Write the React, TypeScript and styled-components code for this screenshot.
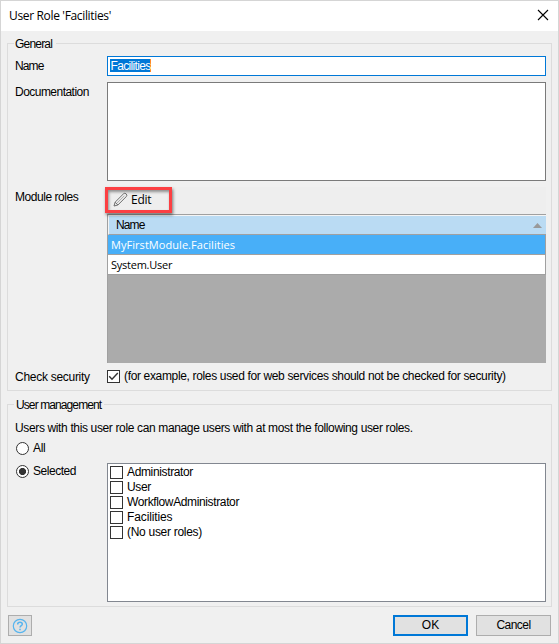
import React from 'react';
import styled, { createGlobalStyle } from 'styled-components';

const GlobalStyle = createGlobalStyle`
  * { box-sizing: border-box; }
  body { margin: 0; background: #f0f0f0; }
`;

const Dialog = styled.main`
  width: 559px;
  height: 644px;
  display: flex;
  flex-direction: column;
  border: 1px solid #d5d5d5;
  background: #f0f0f0;
  color: #000;
  font: 12px/15px "Liberation Sans", Arial, sans-serif;
  overflow: hidden;
`;

const TitleBar = styled.header`
  height: 30px;
  flex: none;
  display: flex;
  align-items: center;
  justify-content: space-between;
  padding: 0 9px 0 8px;
  background: #fff;
`;

const Title = styled.h1`
  margin: 0;
  font: 12px/16px "Open Sans", "Noto Sans", sans-serif;
  letter-spacing: -0.34px;
`;

const CloseButton = styled.button`
  display: flex;
  padding: 0 0 2px;
  border: 0;
  background: none;
`;

const Text = styled.span<{ $spacing?: number }>`
  white-space: nowrap;
  letter-spacing: ${({ $spacing = -0.36 }) => $spacing}px;
`;

const Group = styled.section<{ $height: number; $top: number }>`
  height: ${({ $height }) => $height}px;
  flex: none;
  margin: ${({ $top }) => $top}px 6px 0 6px;
  padding: 0 4px 0 7px;
  border: 1px solid #dcdcdc;
`;

const Legend = styled.h2<{ $width: number; $indent: number; $spacing: number }>`
  width: ${({ $width }) => $width}px;
  height: 15px;
  margin: -7px 0 0 -1px;
  padding-left: ${({ $indent }) => $indent}px;
  background: #f0f0f0;
  font: inherit;
  white-space: nowrap;
  letter-spacing: ${({ $spacing }) => $spacing}px;
`;

const Field = styled.div<{ $top: number }>`
  display: grid;
  grid-template-columns: 92px 439px;
  align-items: start;
  margin-top: ${({ $top }) => $top}px;
`;

const FieldLabel = styled.label<{ $spacing: number; $top?: number }>`
  padding-top: ${({ $top = 3 }) => $top}px;
  white-space: nowrap;
  letter-spacing: ${({ $spacing }) => $spacing}px;
`;

const NameInput = styled.div`
  height: 20px;
  padding: 2px;
  border: 1px solid #0078d7;
  background: #fff;
  display: flex;
`;

const Selection = styled.span`
  width: 41px;
  height: 13px;
  padding-left: 0.5px;
  border-right: 1px solid #ff8728;
  background: #0078d7;
  color: #fff;
  line-height: 14px;
  letter-spacing: -0.66px;
`;

const TextArea = styled.div`
  height: 99px;
  border: 1px solid #7a7a7a;
  background: #fff;
`;

const RolesPanel = styled.div`
  display: flex;
  flex-direction: column;
`;

const Toolbar = styled.div`
  height: 27px;
  display: flex;
  background: #eee;
`;

const EditButton = styled.button`
  width: 67px;
  height: 26px;
  margin-left: -2px;
  padding: 0 0 1px 5px;
  display: flex;
  align-items: center;
  gap: 3px;
  border: 3px solid #fc3f42;
  background: #eee;
  box-shadow: 1px 2px 3px rgba(0, 0, 0, 0.5), inset 1px 2px 3px rgba(0, 0, 0, 0.4);
  color: #000;
  font: 12px/15px "Open Sans", "Noto Sans", sans-serif;
  letter-spacing: -0.25px;
  z-index: 1;
`;

const Grid = styled.div`
  height: 149px;
  border-top: 1px solid #a0a0a0;
  border-left: 1px solid #a0a0a0;
  background: #ababab;
`;

const GridHeader = styled.div`
  height: 20px;
  display: flex;
  align-items: center;
  justify-content: space-between;
  padding: 2px 4px 0 7px;
  border: solid #a0a0a0;
  border-width: 0 0 1px;
  border-left: 1px solid #f4f4f4;
  background: #badbf3;
  box-shadow: inset 0 1px #f4f4f4;
`;

const GridRow = styled.div<{ $selected?: boolean }>`
  height: 20px;
  padding: 1px 0 0 3px;
  border-right: 1px solid #a0a0a0;
  border-bottom: 1px solid #a0a0a0;
  background: ${({ $selected }) => ($selected ? '#48aff8' : '#fff')};
  color: ${({ $selected }) => ($selected ? '#fff' : '#000')};
  font: 11px/17px "Open Sans", "Noto Sans", sans-serif;
`;

const CheckLine = styled.div`
  display: flex;
  align-items: center;
  gap: 4px;
  height: 15px;
`;

const CheckBox = styled.span`
  width: 13px;
  height: 13px;
  flex: none;
  display: flex;
  border: 1px solid #333;
  background: #fff;
`;

const Hint = styled.p`
  margin: 8px 0 0;
  white-space: nowrap;
  letter-spacing: -0.36px;
`;

const RadioLine = styled.label<{ $top: number }>`
  display: flex;
  align-items: center;
  gap: 4px;
  height: 15px;
  margin: ${({ $top }) => $top}px 0 0 1px;
`;

const RadioCircle = styled.span<{ $checked?: boolean }>`
  width: 13px;
  height: 13px;
  border: 1px solid #333;
  border-radius: 50%;
  background: ${({ $checked }) =>
    $checked ? 'radial-gradient(circle, #333 3.2px, #fff 3.9px)' : '#fff'};
`;

const RoleList = styled.div`
  height: 139px;
  padding: 1px 2px;
  border: 1px solid #828790;
  background: #fff;
`;

const Footer = styled.footer`
  display: flex;
  gap: 8px;
  margin: 8px 7px 0;
`;

const Button = styled.button<{ $primary?: boolean }>`
  width: 75px;
  height: 21px;
  padding: 0;
  border: ${({ $primary }) => ($primary ? '2px solid #0078d7' : '1px solid #adadad')};
  background: #e1e1e1;
  color: #000;
  font: inherit;
  line-height: 15px;
`;

const HelpButton = styled(Button)`
  width: 24px;
  display: flex;
  align-items: center;
  justify-content: center;
  margin-right: auto;
`;

const managedRoles: [string, number][] = [
  ['Administrator', -0.36],
  ['User', -0.33],
  ['WorkflowAdministrator', -0.37],
  ['Facilities', -0.12],
  ['(No user roles)', -0.29],
];

function PencilIcon() {
  return (
    <svg width="15" height="15" viewBox="0 0 15 15" fill="none" stroke="#666" strokeWidth="0.95">
      <path d="M1 14 2.1 10.2 10.5 1.8Q11.8.6 13.2 1.9T13.2 4.7L4.9 13ZM2.1 10.2 4.9 13" />
      <path strokeWidth="0.5" d="M3.7 11.4 11.4 3.7" />
    </svg>
  );
}

export default function App() {
  return (
    <>
      <GlobalStyle />
      <Dialog>
        <TitleBar>
          <Title>User Role 'Facilities'</Title>
          <CloseButton aria-label="Close">
            <svg width="12" height="12" viewBox="0 0 12 12" stroke="#000" strokeWidth="1.1">
              <path d="M1 1 11 11M11 1 1 11" />
            </svg>
          </CloseButton>
        </TitleBar>

        <Group $height={348} $top={12}>
          <Legend $width={42} $indent={1} $spacing={-0.8}>General</Legend>
          <Field $top={4}>
            <FieldLabel $spacing={-0.9}>Name</FieldLabel>
            <NameInput><Selection>Facilities</Selection></NameInput>
          </Field>
          <Field $top={6}>
            <FieldLabel $spacing={-0.53}>Documentation</FieldLabel>
            <TextArea />
          </Field>
          <Field $top={6}>
            <FieldLabel $spacing={-0.45}>Module roles</FieldLabel>
            <RolesPanel>
              <Toolbar>
                <EditButton><PencilIcon />Edit</EditButton>
              </Toolbar>
              <Grid>
                <GridHeader>
                  <Text $spacing={-0.9}>Name</Text>
                  <svg width="9" height="5" viewBox="0 0 9 5"><path d="M0 5 4.5 0 9 5Z" fill="#999" /></svg>
                </GridHeader>
                <GridRow $selected><Text $spacing={0.05}>MyFirstModule.Facilities</Text></GridRow>
                <GridRow><Text $spacing={-0.25}>System.User</Text></GridRow>
              </Grid>
            </RolesPanel>
          </Field>
          <Field $top={6}>
            <FieldLabel $spacing={-0.28} $top={1}>Check security</FieldLabel>
            <CheckLine>
              <CheckBox>
                <svg width="11" height="11" viewBox="0 0 11 11" fill="none" stroke="#333" strokeWidth="1.4">
                  <path d="M1.2 5.3 4 8.3 9.8 2" />
                </svg>
              </CheckBox>
              <Text $spacing={-0.344}>(for example, roles used for web services should not be checked for security)</Text>
            </CheckLine>
          </Field>
        </Group>

        <Group $height={203} $top={13}>
          <Legend $width={90} $indent={2} $spacing={-0.9}>User management</Legend>
          <Hint>Users with this user role can manage users with at most the following user roles.</Hint>
          <RadioLine $top={5}><RadioCircle /><Text>All</Text></RadioLine>
          <Field $top={7}>
            <RadioLine $top={1}><RadioCircle $checked /><Text $spacing={-0.46}>Selected</Text></RadioLine>
            <RoleList>
              {managedRoles.map(([role, spacing]) => (
                <CheckLine key={role}><CheckBox /><Text $spacing={spacing}>{role}</Text></CheckLine>
              ))}
            </RoleList>
          </Field>
        </Group>

        <Footer>
          <HelpButton aria-label="Help">
            <svg width="16" height="16" viewBox="0 0 16 16" fill="none" stroke="#56b4ee" strokeWidth="1.2">
              <circle cx="8" cy="8" r="6.7" />
              <path strokeWidth="1.5" d="M5.7 6.4Q5.7 4.3 8 4.3T10.3 6.2C10.3 7.7 8 7.7 8 9.5M8 10.8V12.3" />
            </svg>
          </HelpButton>
          <Button $primary>OK</Button>
          <Button><Text $spacing={-0.55}>Cancel</Text></Button>
        </Footer>
      </Dialog>
    </>
  );
}
